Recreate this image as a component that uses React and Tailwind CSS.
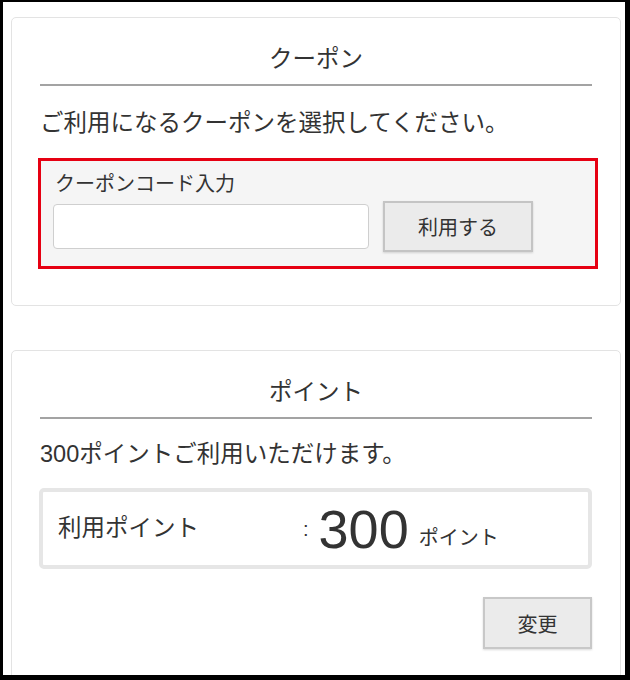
import React from 'react';

const font = { fontFamily: '"Liberation Sans", "Noto Sans CJK JP", sans-serif' };

const Card = ({ title, children, className = '' }) => (
  <div className={`ml-2 mr-1 bg-white border border-[#e3e3e3] rounded-[5px] px-[28px] ${className}`}>
    {/* Section heading */}
    <h2 className="pt-[25px] text-center text-[23.5px] leading-[32px] text-[#333]">{title}</h2>
    <div className="mt-[9px] h-[2px] bg-[#a3a3a3]"></div>
    {children}
  </div>
);

const App = () => {
  return (
    <div
      className="h-[680px] overflow-hidden bg-white border-black border-l-[3px] border-t-2 border-r-[5px] border-b-[5px] text-[#333]"
      style={font}
    >
      {/* Coupon */}
      <Card title="クーポン" className="mt-[15px] pb-[36px]">
        <p className="mt-[21px] text-[23.5px] leading-[32px]">ご利用になるクーポンを選択してください。</p>

        <div className="mt-[19px] ml-[-2px] mr-[-6px] border-[3px] border-[#e60012] bg-[#f5f5f5] pl-[12px] pt-[10px] pb-[14px]">
          <label className="block ml-[2px] text-[20px] leading-[26px]">クーポンコード入力</label>
          <div className="mt-[4px] flex items-center gap-[14px]">
            <input
              type="text"
              className="w-[316px] h-[45px] bg-white border border-[#cfcfcf] rounded-[4px] px-3 outline-none"
            />
            <button className="w-[150px] h-[51px] pt-[3px] bg-[#ebebeb] border-2 border-[#c4c4c4] shadow-[0_1px_2px_rgba(0,0,0,0.15)] text-[20px] text-[#333]">
              利用する
            </button>
          </div>
        </div>
      </Card>

      {/* Points */}
      <Card title="ポイント" className="mt-[44px] pb-[60px]">
        <p className="mt-[19px] text-[23.5px] leading-[32px]">300ポイントご利用いただけます。</p>

        <div className="mt-[18px] ml-[-1px] border-4 border-[#e6e6e6] rounded-[5px] h-[81px] pl-[15px] flex items-center">
          <span className="w-[245px] text-[23.5px]">利用ポイント</span>
          <span className="text-[20px] mr-[10px]">:</span>
          <span className="text-[54px] leading-none">300</span>
          <span className="ml-[10px] mt-[18px] text-[20px]">ポイント</span>
        </div>

        <div className="mt-[28px] flex justify-end">
          <button className="w-[109px] h-[52px] pt-[4px] bg-[#ebebeb] border-2 border-[#c8c8c8] shadow-[0_1px_2px_rgba(0,0,0,0.15)] text-[20px] text-[#333]">
            変更
          </button>
        </div>
      </Card>
    </div>
  );
};

export default App;
